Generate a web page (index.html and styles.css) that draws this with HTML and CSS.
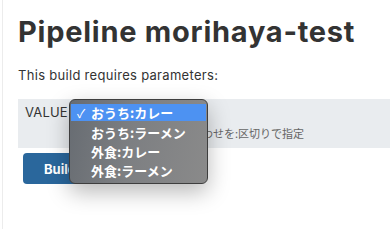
FILE: index.html
```html
<!DOCTYPE html>
<html lang="ja">
<head>
<meta charset="utf-8">
<title>Pipeline morihaya-test</title>
<link rel="stylesheet" href="styles.css">
</head>
<body>
<div class="page">
  <h1 class="title">Pipeline morihaya-test</h1>
  <p class="intro">This build requires parameters:</p>
  <div class="param">
    <div class="param-label">VALUE</div>
    <div class="param-body">
      <div class="select">おうち:カレー</div>
      <div class="param-desc">場所とメニュー名の組み合わせを:区切りで指定</div>
    </div>
  </div>
  <button class="build-btn">Build</button>

  <ul class="menu">
    <li class="menu-item is-selected"><span class="check">✓</span>おうち:カレー</li>
    <li class="menu-item"><span class="check"></span>おうち:ラーメン</li>
    <li class="menu-item"><span class="check"></span>外食:カレー</li>
    <li class="menu-item"><span class="check"></span>外食:ラーメン</li>
  </ul>
</div>
</body>
</html>
```

FILE: styles.css
```css
html, body {
  margin: 0;
  padding: 0;
  background: #ffffff;
}

body {
  font-family: Inter, "Noto Sans CJK JP", sans-serif;
  color: #333333;
}

.page {
  position: relative;
  margin-left: 2px;
  border-left: 1px solid #ececec;
  padding-left: 15px;
  min-height: 229px;
  box-sizing: border-box;
}

.title {
  margin: 0;
  padding-top: 15px;
  font-size: 29px;
  line-height: 34px;
  font-weight: 700;
  color: #333333;
  letter-spacing: 0.75px;
}

.intro {
  margin: 18px 0 16px;
  font-size: 13px;
  line-height: 16px;
  color: #333333;
  letter-spacing: 0.3px;
}

.param {
  display: flex;
  background: #e9ecef;
  height: 49px;
  box-sizing: border-box;
  padding: 5px 0 0 7px;
}

.param-label {
  width: 45px;
  font-size: 13px;
  line-height: 16px;
  color: #333333;
  letter-spacing: 0.2px;
}

.param-body {
  display: flex;
  flex-direction: column;
  gap: 6px;
}

.select {
  font-size: 13px;
  line-height: 16px;
  font-family: "Noto Sans CJK JP", sans-serif;
}

.param-desc {
  font-family: "Noto Sans CJK JP", sans-serif;
  font-size: 11px;
  line-height: 14px;
  color: #666666;
}

.build-btn {
  display: block;
  margin: 5px 0 0 5px;
  height: 31px;
  width: 82px;
  border: none;
  border-radius: 4px;
  background: #2a679c;
  color: #ffffff;
  font-family: Inter, sans-serif;
  font-weight: 700;
  font-size: 13px;
  text-align: left;
  padding: 0 0 0 21px;
}

.menu {
  position: absolute;
  left: 66px;
  top: 99px;
  width: 139px;
  height: 85px;
  margin: 0;
  padding: 4px 1px 0;
  box-sizing: border-box;
  list-style: none;
  border: 1px solid #3e3e3e;
  border-radius: 6px;
  background: linear-gradient(100deg, #676c72 0%, #7d7f82 45%, #8a8a8a 100%);
  box-shadow: 0 8px 22px rgba(0, 0, 0, 0.28);
}

.menu-item {
  display: flex;
  align-items: center;
  height: 19px;
  font-family: "Noto Sans CJK JP", sans-serif;
  font-weight: 700;
  font-size: 13px;
  color: #ffffff;
  white-space: nowrap;
}

.menu-item.is-selected {
  background: #4d92f2;
  height: 17px;
  margin-bottom: 2px;
}

.check {
  display: inline-block;
  width: 14px;
  margin-left: 6px;
  font-size: 12px;
  font-weight: 400;
}
```
